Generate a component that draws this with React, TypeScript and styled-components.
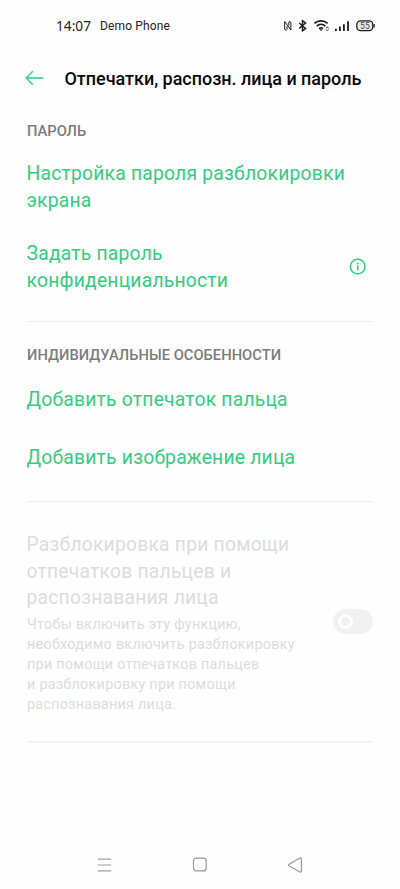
import React from 'react';
import styled, { createGlobalStyle } from 'styled-components';

const GREEN = '#35cc82';

const GlobalStyle = createGlobalStyle`
  * { box-sizing: border-box; }
  body { margin: 0; background: #fefefe; font-family: Roboto, sans-serif; }
  h1, h2, p { margin: 0; }
  svg { display: block; flex: none; }
`;

const Screen = styled.main`
  width: 400px;
  height: 889px;
  display: flex;
  flex-direction: column;
  overflow: hidden;
  background: #fefefe;
`;

const StatusBar = styled.header`
  height: 52px;
  padding: 0 25px 0 56px;
  display: flex;
  align-items: center;
  color: #222;
`;

const Clock = styled.time`
  width: 44px;
  font: 13.7px/20px 'Noto Sans', sans-serif;
`;

const Carrier = styled.span`
  flex: 1;
  font-size: 12px;
  line-height: 20px;
  letter-spacing: 0.15px;
  color: #222;
`;

const TitleBar = styled.div`
  height: 53px;
  padding-left: 25px;
  display: flex;
  align-items: center;
`;

const BackButton = styled.button`
  width: 39.5px;
  padding: 0 0 1px;
  border: 0;
  background: none;
`;

const Title = styled.h1`
  font-size: 18px;
  line-height: 24px;
  font-weight: 500;
  letter-spacing: -0.03px;
  white-space: nowrap;
  color: #0a0a0a;
`;

const Content = styled.div`
  flex: 1;
  padding: 0 27px;
`;

const Section = styled.section<{ $height: number; $line?: number }>`
  height: ${p => p.$height}px;
  border-bottom: ${p => p.$line ?? 1}px solid ${p => (p.$line ? '#f3f3f3' : '#ededed')};
`;

const SectionTitle = styled.h2<{ $top: number }>`
  padding-top: ${p => p.$top}px;
  font-size: 14.7px;
  line-height: 20px;
  font-weight: 500;
  letter-spacing: 0.03px;
  color: #7b7b7b;
`;

const Row = styled.div<{ $top: number; $disabled?: boolean }>`
  padding-top: ${p => p.$top}px;
  display: flex;
  align-items: center;
  justify-content: space-between;
  color: ${p => (p.$disabled ? '#dcdcdc' : GREEN)};
`;

const RowLabel = styled.p`
  margin-left: -0.5px;
  font-size: 19.3px;
  line-height: 26.7px;
  letter-spacing: 0.22px;
  white-space: nowrap;
`;

const RowHint = styled.p`
  padding-top: 2.5px;
  font-size: 14.4px;
  line-height: 20px;
  letter-spacing: 0.25px;
  white-space: nowrap;
`;

const InfoIcon = styled.svg`
  margin: 0 7px 4px 0;
`;

const Switch = styled.span`
  width: 40px;
  height: 25px;
  margin-bottom: 3px;
  padding-left: 5px;
  border-radius: 13px;
  display: flex;
  align-items: center;
  background: #f1f1f1;
`;

const Knob = styled.span`
  width: 15px;
  height: 15px;
  border: 3px solid #fff;
  border-radius: 50%;
`;

const NavBar = styled.nav`
  height: 49px;
  padding: 0 97px;
  display: flex;
  align-items: center;
  justify-content: space-between;
`;

const StatusIcons = () => (
  <svg width="92" height="16" viewBox="0 0 92 16" fill="none" stroke="#1c1c1c">
    <path d="M3.6 12.2 1.7 11.4V3.6L7.9 12V4.4L6 3.4M4 8.2v3.4M5.8 4v3.6" strokeWidth="1" />
    <path d="m16.2 5 6.4 5.4-3.1 2.4V2.6L22.600 5l-6.400 5.400" strokeWidth="1.4" />
    <path d="M31.400 5.400c3.800-3.400 9.400-3.400 13.200 0M33.700 8.100c2.500-2.300 6.100-2.300 8.600 0M36 10.600c1.300-1.100 2.700-1.100 4 0" strokeWidth="1.6" />
    <path d="m36.300 11.200 1.700 1.900 1.700-1.900z" fill="#1c1c1c" stroke="none" />
    <path d="m43.200 10.200 1.200-1.400 1.200 1.400M43.200 11.400l1.200 1.400 1.200-1.400" strokeWidth=".9" />
    <path d="M52.900 13v-2.300M56.900 13V8.500M60.900 13V6.200M65 13V3.200" strokeWidth="1.8" />
    <rect x="73.800" y="2.800" width="16" height="9.800" rx="3.700" fill="#e9e9e9" strokeWidth="1.3" />
    <path d="M91.100 6v3.400" strokeWidth="1.3" />
    <text x="82" y="10.800" textAnchor="middle" fontFamily="Roboto" fontSize="8.500" letterSpacing=".2" fill="#444" stroke="none">55</text>
  </svg>
);

export default function App() {
  return (
    <Screen>
      <GlobalStyle />
      <StatusBar>
        <Clock>14:07</Clock>
        <Carrier>Demo Phone</Carrier>
        <StatusIcons />
      </StatusBar>
      <TitleBar>
        <BackButton aria-label="Назад">
          <svg width="19" height="16" viewBox="0 0 19 16" fill="none" stroke={GREEN} strokeWidth="1.4">
            <path d="M18.3 8H1.2M7.8 1.3 1.2 8l6.6 6.7" />
          </svg>
        </BackButton>
        <Title>Отпечатки, распозн. лица и пароль</Title>
      </TitleBar>
      <Content>
        <Section $height={217}>
          <SectionTitle $top={16}>ПАРОЛЬ</SectionTitle>
          <Row $top={20}>
            <RowLabel>Настройка пароля разблокировки<br />экрана</RowLabel>
          </Row>
          <Row $top={27}>
            <RowLabel>Задать пароль<br />конфиденциальности</RowLabel>
            <InfoIcon width="17" height="17" viewBox="0 0 17 17" fill="none" stroke={GREEN} strokeWidth="1.5">
              <circle cx="8.700" cy="8.500" r="7.300" />
              <path d="M8.700 7.500v4.700M8.700 4.700v1.700" strokeWidth="1.7" />
            </InfoIcon>
          </Row>
        </Section>
        <Section $height={180}>
          <SectionTitle $top={23}>ИНДИВИДУАЛЬНЫЕ ОСОБЕННОСТИ</SectionTitle>
          <Row $top={22}><RowLabel>Добавить отпечаток пальца</RowLabel></Row>
          <Row $top={31}><RowLabel>Добавить изображение лица</RowLabel></Row>
        </Section>
        <Section $height={241} $line={2}>
          <Row $top={30} $disabled>
            <div>
              <RowLabel>Разблокировка при помощи<br />отпечатков пальцев и<br />распознавания лица</RowLabel>
              <RowHint>
                Чтобы включить эту функцию,<br />необходимо включить разблокировку<br />
                при помощи отпечатков пальцев<br />и разблокировку при помощи<br />распознавания лица.
              </RowHint>
            </div>
            <Switch role="switch" aria-checked="false" aria-disabled="true"><Knob /></Switch>
          </Row>
        </Section>
      </Content>
      <NavBar>
        <svg width="15" height="14" viewBox="0 0 15 14" stroke="#a0a0a0" strokeWidth="1.2">
          <path d="M.8 1.2h13.4M.8 7h13.4M.8 12.8h13.4" />
        </svg>
        <svg width="15" height="15" viewBox="0 0 15 15" fill="none" stroke="#989898" strokeWidth="1.2">
          <rect x="1.5" y="1.2" width="12.700" height="12.700" rx="3" />
        </svg>
        <svg width="16" height="16" viewBox="0 0 16 16" fill="none" stroke="#989898" strokeWidth="1.2" strokeLinejoin="round">
          <path d="M2 7.3 13 1.1q1.4-.5 1.4.9v12q0 1.4-1.4.9L2 8.7q-1-.7 0-1.4z" />
        </svg>
      </NavBar>
    </Screen>
  );
}
